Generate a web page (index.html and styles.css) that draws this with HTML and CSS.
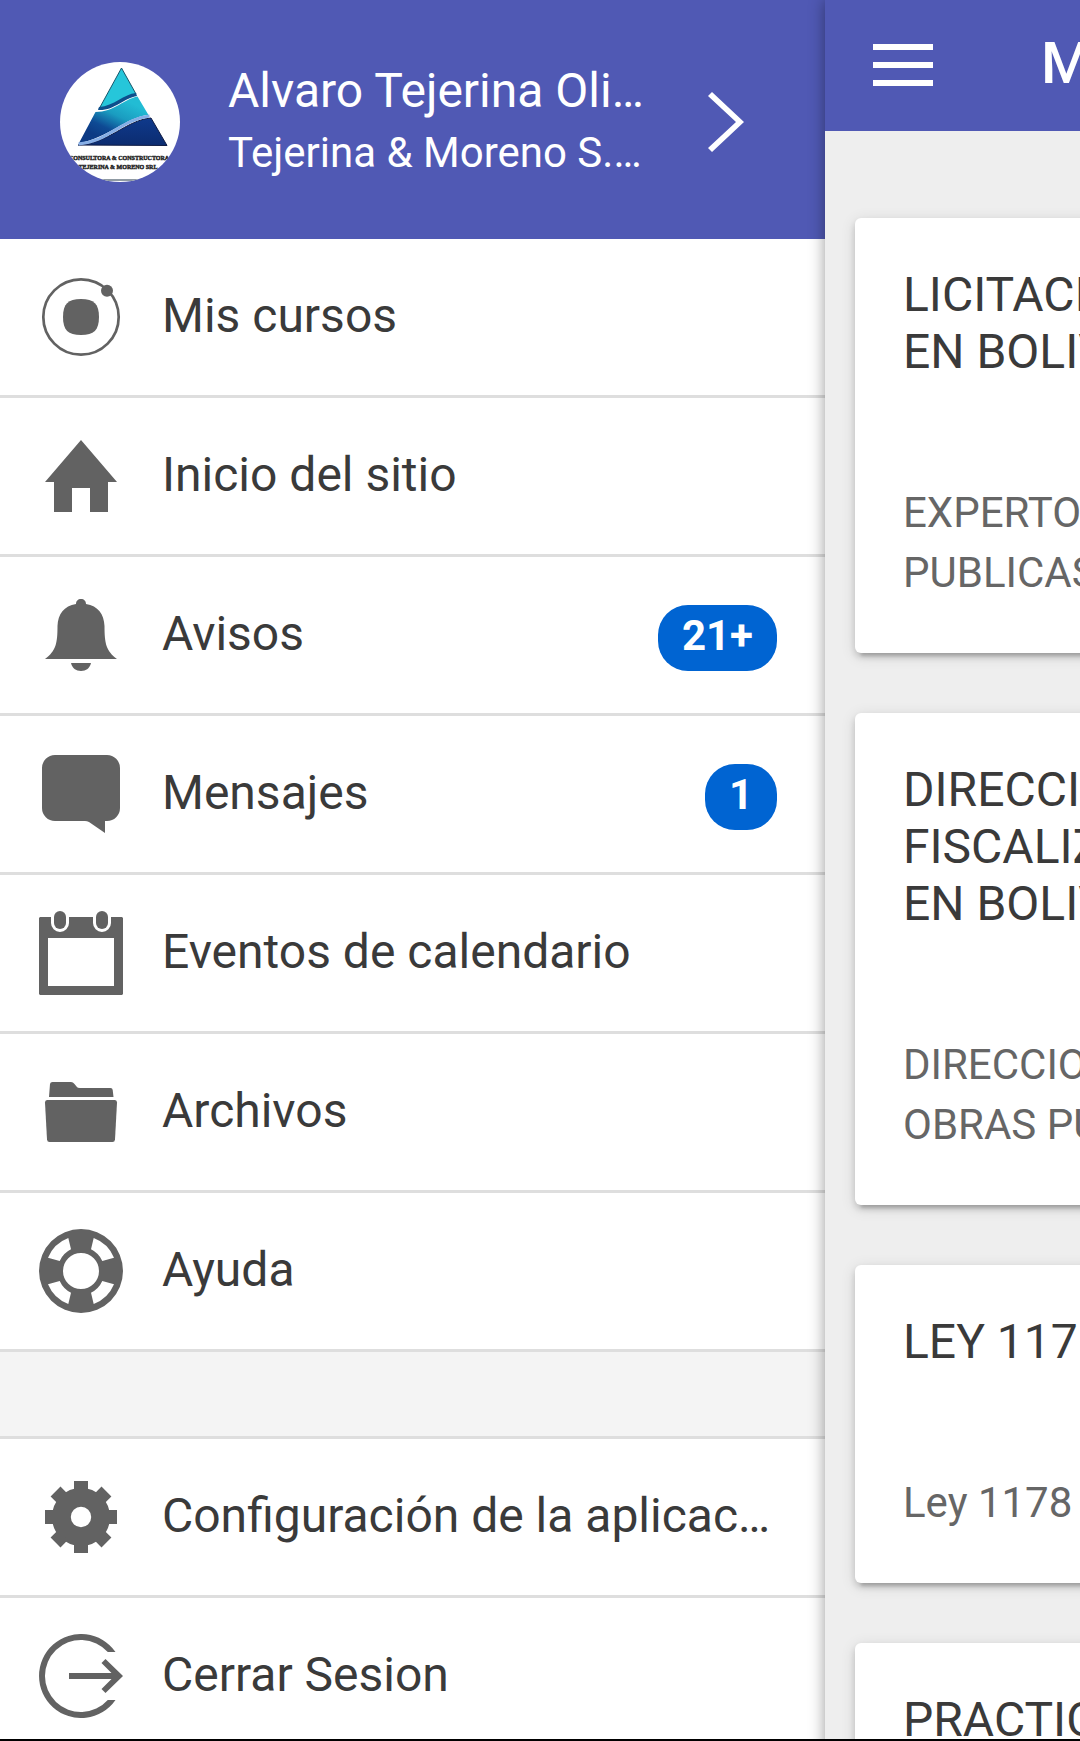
FILE: index.html
```html
<!DOCTYPE html>
<html lang="es">
<head>
<meta charset="utf-8">
<meta name="viewport" content="width=device-width, initial-scale=1">
<title>Mis cursos</title>
<link rel="stylesheet" href="styles.css">
</head>
<body>
<div class="app">
  <aside class="menu">
    <a class="profile" href="#perfil">
      <svg class="avatar" viewBox="0 0 120 120" role="img" aria-label="Tejerina &amp; Moreno">
        <defs>
          <linearGradient id="mid" x1="0.7" y1="0.1" x2="0.2" y2="0.8">
            <stop offset="0" stop-color="#22bcd4"/>
            <stop offset="0.4" stop-color="#1a9cc0"/>
            <stop offset="0.75" stop-color="#0e4a94"/>
            <stop offset="1" stop-color="#0c3a84"/>
          </linearGradient>
          <linearGradient id="low" x1="0" y1="0" x2="0" y2="1">
            <stop offset="0" stop-color="#0f3a8c"/>
            <stop offset="1" stop-color="#0c2c70"/>
          </linearGradient>
        </defs>
        <rect width="120" height="120" fill="#fff"/>
        <path d="M61.5 6L76 32C65 33 54 45 39 47Z" fill="#26c6da" stroke="#17566a" stroke-width="1"/>
        <path d="M76 31C64 32 54 44 39 45L38 48C54 49 64 36 77 34Z" fill="#0d4f8c"/>
        <path d="M35.500 50C54 50 64 37 77.500 34.500L88.500 53C66 55 48 76 19 81Z" fill="url(#mid)"/>
        <path d="M18 83C48 82 66 58 91 56L107 83.500Z" fill="url(#low)" stroke="#101c44" stroke-width="1"/>
        <path d="M18.500 82C48 80 62 57 89.500 54" fill="none" stroke="#86aee6" stroke-width="3"/>
        <text x="59" y="98" class="avatar-text">CONSULTORA &amp; CONSTRUCTORA</text>
        <text x="58" y="107" class="avatar-text">TEJERINA &amp; MORENO SRL</text>
        <rect y="117" width="120" height="2" fill="#8f9aa3"/>
      </svg>
      <span class="profile-text">
        <span class="profile-name">Alvaro Tejerina Oli…</span>
        <span class="profile-site">Tejerina &amp; Moreno S.…</span>
      </span>
      <svg class="chevron" viewBox="0 0 36 60" aria-hidden="true"><path d="M4 0L36 30L4 60L0 56L28 30L0 4Z"/></svg>
    </a>
    <nav>
      <ul class="list">
        <li><a class="item" href="#cursos">
          <svg class="icon" viewBox="0 0 84 84" aria-hidden="true">
            <circle cx="42" cy="42" r="37.700" fill="none" stroke="currentColor" stroke-width="2.700"/>
            <circle cx="68" cy="15.700" r="6"/>
            <path d="M42 24C55 24 60 29 60 42S55 60 42 60S24 55 24 42S29 24 42 24Z"/>
          </svg>
          <span class="label">Mis cursos</span></a></li>
        <li><a class="item" href="#inicio">
          <svg class="icon" viewBox="0 0 84 84" aria-hidden="true"><path d="M42 6L78 48H69V78H51V54H33V78H15V48H6Z"/></svg>
          <span class="label">Inicio del sitio</span></a></li>
        <li><a class="item" href="#avisos">
          <svg class="icon" viewBox="0 0 84 84" aria-hidden="true">
            <path d="M42 6C45 6 47 8 47 11C59 13 65 21 65.500 33C65.500 50 67 58 78 66H6C17 58 18.500 50 18.500 33C19 21 25 13 37 11C37 8 39 6 42 6Z"/>
            <path d="M32 70H52C51 75 47 78 42 78S33 75 32 70Z"/>
          </svg>
          <span class="label">Avisos</span>
          <span class="badge">21+</span></a></li>
        <li><a class="item" href="#mensajes">
          <svg class="icon" viewBox="0 0 84 84" aria-hidden="true"><path d="M16 3H68A13 13 0 0 1 81 16V56A13 13 0 0 1 68 69H66V81L50 70Q48 69 46 69H16A13 13 0 0 1 3 56V16A13 13 0 0 1 16 3Z"/></svg>
          <span class="label">Mensajes</span>
          <span class="badge">1</span></a></li>
        <li><a class="item" href="#eventos">
          <svg class="icon" viewBox="0 0 84 84" aria-hidden="true">
            <path fill-rule="evenodd" d="M1 6H12V12A9 9 0 0 0 30 12V6H54V12A9 9 0 0 0 72 12V6H83L84 7V83L83 84H1L0 83V7ZM9 27V75H75V27Z"/>
            <rect x="15" y="0" width="12" height="18" rx="6"/>
            <rect x="57" y="0" width="12" height="18" rx="6"/>
          </svg>
          <span class="label">Eventos de calendario</span></a></li>
        <li><a class="item" href="#archivos">
          <svg class="icon" viewBox="0 0 84 84" aria-hidden="true">
            <path d="M10 27L11 14Q11.300 12 13.500 12H32Q34 12 35.500 14L37.500 16.500Q38.500 18 41 18H71.500Q73.500 18 73.700 20L74.500 27Z"/>
            <path d="M8 30H76Q78 30 78 32.500L76 69.500Q75.700 72 73.500 72H10.500Q8.300 72 8 69.500L6 32.500Q6 30 8 30Z"/>
          </svg>
          <span class="label">Archivos</span></a></li>
        <li><a class="item" href="#ayuda">
          <svg class="icon" viewBox="0 0 84 84" aria-hidden="true">
            <path fill-rule="evenodd" d="M42 0A42 42 0 1 1 42 84A42 42 0 1 1 42 0ZM42 24A18 18 0 1 0 42 60A18 18 0 1 0 42 24ZM29.300 9A35.500 35.500 0 0 0 9 28.700L20.700 32A24 24 0 0 1 32 20.300ZM54.700 9L52 20.300A24 24 0 0 1 63.300 32L75 28.700A35.500 35.500 0 0 0 54.700 9ZM29.300 75L32 63.700A24 24 0 0 1 20.700 52L9 55.300A35.500 35.500 0 0 0 29.300 75ZM54.700 75A35.500 35.500 0 0 0 75 55.300L63.300 52A24 24 0 0 1 52 63.700Z"/>
          </svg>
          <span class="label">Ayuda</span></a></li>
        <li class="divider"></li>
        <li><a class="item" href="#configuracion">
          <svg class="icon" viewBox="0 0 84 84" aria-hidden="true">
            <circle cx="42" cy="42" r="19.600" fill="none" stroke="currentColor" stroke-width="18.800"/>
            <g id="teeth"><path d="M35 6H49V16H35ZM35 68H49V78H35ZM6 35H16V49H6ZM68 35H78V49H68Z"/></g>
            <use href="#teeth" transform="rotate(45 42 42)"/>
          </svg>
          <span class="label">Configuración de la aplicac…</span></a></li>
        <li><a class="item" href="#salir">
          <svg class="icon" viewBox="0 0 84 84" aria-hidden="true">
            <path d="M76.500 18A42 42 0 1 0 76.500 66H68.800A36 36 0 1 1 68.800 18Z"/>
            <path d="M66.500 25L84 42L66.500 59L62.500 55L72.500 45H30V39H72.500L62.500 29Z"/>
          </svg>
          <span class="label">Cerrar Sesion</span></a></li>
      </ul>
    </nav>
  </aside>
  <div class="page">
    <header class="toolbar">
      <button class="menu-button" type="button" aria-label="Menú">
        <svg viewBox="0 0 60 42" width="60" height="42" aria-hidden="true"><path d="M0 0H60V6H0ZM0 18H60V24H0ZM0 36H60V42H0Z"/></svg>
      </button>
      <h1 class="title">M</h1>
    </header>
    <main class="cards">
      <article class="card"><h2>LICITACI<br>EN BOLIV</h2><p>EXPERTO<br>PUBLICAS</p></article>
      <article class="card"><h2>DIRECCI<br>FISCALIZ<br>EN BOLIV</h2><p>DIRECCIO<br>OBRAS PU</p></article>
      <article class="card"><h2>LEY 117</h2><p>Ley 1178</p></article>
      <article class="card"><h2>PRACTIC</h2></article>
    </main>
  </div>
</div>
</body>
</html>
```
FILE: styles.css
```css
* { box-sizing: border-box; }

body {
  margin: 0;
  font-family: Roboto, "Liberation Sans", sans-serif;
  font-size: 48px;
  color: #3a3a3a;
  background: #fff;
}

a { color: inherit; text-decoration: none; }
h1, h2, p { margin: 0; font-weight: 400; }

.app {
  display: grid;
  grid-template-columns: 55fr 17fr;
  height: 100vh;
  overflow: hidden;
  border-bottom: 2px solid #000;
}

/* Side menu */
.menu {
  min-width: 0;
  min-height: 0;
  overflow: hidden;
  background: #fff;
}

.profile {
  display: flex;
  align-items: center;
  padding: 61px 81px 56px 60px;
  color: #fff;
  background: #5059b4;
}

.avatar {
  flex: none;
  width: 120px;
  height: 120px;
  margin-right: 48px;
  border-radius: 50%;
}

.avatar-text {
  font: bold 6px "Liberation Serif", serif;
  text-anchor: middle;
  fill: #222;
  stroke: #222;
  stroke-width: 0.4;
}

.profile-text {
  display: grid;
  flex: 1;
  gap: 2px;
  min-width: 0;
  line-height: 60px;
  white-space: nowrap;
}

.profile-site { font-size: 42px; }

.chevron { flex: none; width: 36px; height: 60px; fill: #fff; }

.list { margin: 0; padding: 0; list-style: none; }

.item {
  display: flex;
  align-items: center;
  height: 159px;
  padding: 0 48px 0 39px;
  border-bottom: 3px solid #dedede;
}

.icon {
  flex: none;
  width: 84px;
  height: 84px;
  margin-right: 39px;
  color: #626262;
  fill: currentColor;
}

.label {
  flex: 1;
  min-width: 0;
  padding-bottom: 4px;
  white-space: nowrap;
}

.badge {
  margin-top: 6px;
  padding: 7px 24px 11px;
  border-radius: 30px;
  font-size: 42px;
  font-weight: 700;
  line-height: 48px;
  color: #fff;
  background: #0064d2;
}

.divider {
  height: 87px;
  border-bottom: 3px solid #dedede;
  background: #f4f4f4;
}

/* Course page, pushed aside by the menu */
.page {
  position: relative;
  min-width: 0;
  background: #eee;
  box-shadow: 0 0 15px rgba(0, 0, 0, 0.4);
}

.toolbar {
  display: flex;
  align-items: center;
  gap: 108px;
  height: 131px;
  padding: 0 0 2px 48px;
  color: #fff;
  background: #5059b4;
}

.menu-button {
  display: flex;
  padding: 0;
  border: 0;
  color: inherit;
  background: none;
}

.menu-button svg { fill: currentColor; }

.title {
  padding-bottom: 4px;
  font-size: 58px;
  font-weight: 500;
}

.cards {
  display: grid;
  gap: 60px;
  padding: 87px 0 0 30px;
}

.card {
  width: 100vw;
  padding: 48px 48px 50px;
  border-radius: 6px;
  background: #fff;
  box-shadow: 0 4px 6px rgba(0, 0, 0, 0.14), 0 9px 3px -6px rgba(0, 0, 0, 0.16), 0 3px 15px rgba(0, 0, 0, 0.12);
}

.card h2 { font-size: 48px; line-height: 57px; }

.card p {
  margin-top: 103px;
  font-size: 42px;
  line-height: 60px;
  color: #666;
}
```
